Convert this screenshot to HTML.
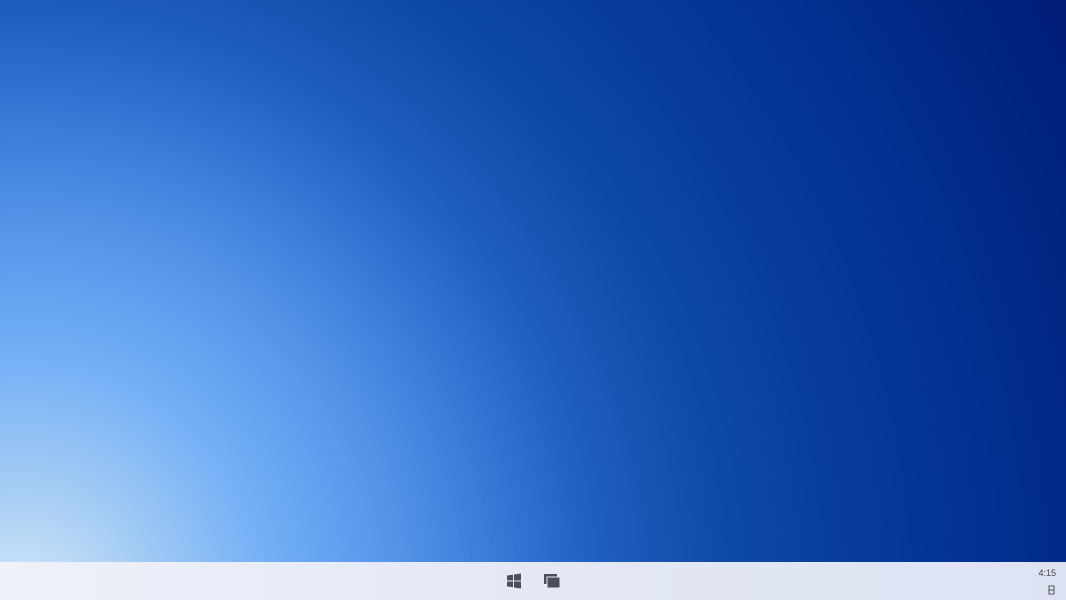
<!DOCTYPE html>
<html><head><meta charset="utf-8"><style>
html,body{margin:0;padding:0;width:1066px;height:600px;overflow:hidden;}
.bg{position:absolute;left:0;top:0;width:1066px;height:562px;
background:radial-gradient(ellipse 1250px 1300px at 20px 620px, #dcebf8 0%, #a6cdf4 10%, #75b0f6 20%, #5596ea 30%, #3678d6 39%, #1f60c2 46%, #0f4aa8 56%, #063a9a 68%, #012c8c 82%, #001e78 95%);}
.bar{position:absolute;left:0;top:562px;width:1066px;height:38px;background:linear-gradient(90deg,#eef1f9,#e4e8f5 50%,#dde3f3);}
.time{position:absolute;right:10px;top:568px;font:9px "Liberation Sans",sans-serif;color:#444;}
</style></head><body>
<div class="bg"></div>
<div class="bar"></div>
<svg style="position:absolute;left:506px;top:573px" width="16" height="16" viewBox="0 0 16 16">
<path fill="#4a4f5a" d="M1 2.5l6-0.9v5.8H1zM8 1.5l7-1v7H8zM1 8.5h6v5.8l-6-0.9zM8 8.5h7v7l-7-1z"/></svg>
<svg style="position:absolute;left:543px;top:573px" width="18" height="16" viewBox="0 0 18 16">
<rect x="1" y="1" width="13" height="10" fill="#4a4f5a"/><rect x="4" y="4" width="13" height="11" fill="#4a4f5a" stroke="#e4e8f5" stroke-width="1"/></svg>
<div class="time">4:15</div>
<svg style="position:absolute;left:1048px;top:585px" width="7" height="10" viewBox="0 0 7 10"><rect x="1" y="1" width="5" height="8" fill="none" stroke="#555" stroke-width="1"/><line x1="1" y1="5" x2="6" y2="5" stroke="#555"/></svg>
</body></html>
